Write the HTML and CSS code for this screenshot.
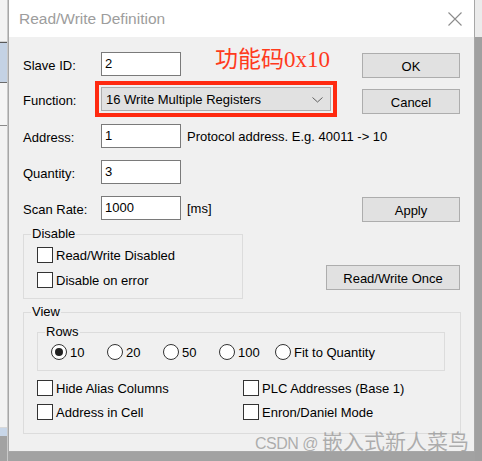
FILE: index.html
```html
<!DOCTYPE html>
<html lang="en">
<head>
    <title>Read/Write Definition</title>
    <meta charset="UTF-8">
    <link rel="stylesheet" href="styles.css">
</head>
<body>
<div class="desk">
    <!-- кусок окна за диалогом -->
    <div class="side side-left">
        <div class="seg s1"></div>
        <div class="seg s2"></div>
        <div class="seg s3"></div>
        <div class="seg s4"></div>
        <div class="seg s5"></div>
        <div class="seg s6"></div>
        <div class="seg s7"></div>
        <div class="seg s8"></div>
    </div>

    <div class="window">
        <div class="titlebar">
            <span class="title">Read/Write Definition</span>
            <svg class="close" width="14" height="14" viewBox="0 0 14 14">
                <path d="M0.5 0.5 L13.5 13.5 M13.5 0.5 L0.5 13.5" stroke="#8c8c8c" stroke-width="1.1" fill="none"/>
            </svg>
        </div>

        <div class="client">
            <div class="row">
                <span class="label">Slave ID:</span>
                <div class="input">2</div>
                <span class="note">功能码0x10</span>
                <button class="btn btn-ok">OK</button>
            </div>
            <div class="row row-func">
                <span class="label">Function:</span>
                <div class="select">
                    <span>16 Write Multiple Registers</span>
                    <svg width="11" height="6" viewBox="0 0 11 6">
                        <path d="M0.5 0.5 L5.5 5 L10.5 0.5" stroke="#606060" stroke-width="1" fill="none"/>
                    </svg>
                </div>
                <button class="btn btn-cancel">Cancel</button>
            </div>
            <div class="row">
                <span class="label">Address:</span>
                <div class="input">1</div>
                <span class="hint">Protocol address. E.g. 40011 -&gt; 10</span>
            </div>
            <div class="row">
                <span class="label">Quantity:</span>
                <div class="input">3</div>
            </div>
            <div class="row">
                <span class="label">Scan Rate:</span>
                <div class="input">1000</div>
                <span class="hint">[ms]</span>
                <button class="btn btn-apply">Apply</button>
            </div>

            <div class="disable-row">
                <fieldset class="group group-disable">
                    <legend>Disable</legend>
                    <div class="check"><span class="box"></span>Read/Write Disabled</div>
                    <div class="check"><span class="box"></span>Disable on error</div>
                </fieldset>
                <button class="btn btn-once">Read/Write Once</button>
            </div>

            <fieldset class="group group-view">
                <legend>View</legend>
                <fieldset class="group group-rows">
                    <legend>Rows</legend>
                    <div class="radios">
                        <div class="radio"><span class="dot on"></span>10</div>
                        <div class="radio"><span class="dot"></span>20</div>
                        <div class="radio"><span class="dot"></span>50</div>
                        <div class="radio"><span class="dot"></span>100</div>
                        <div class="radio radio-last"><span class="dot"></span>Fit to Quantity</div>
                    </div>
                </fieldset>
                <div class="checks">
                    <div class="check"><span class="box"></span>Hide Alias Columns</div>
                    <div class="check"><span class="box"></span>PLC Addresses (Base 1)</div>
                    <div class="check"><span class="box"></span>Address in Cell</div>
                    <div class="check"><span class="box"></span>Enron/Daniel Mode</div>
                </div>
            </fieldset>

            <div class="watermark"><span class="wm-lat">CSDN @</span><span class="wm-cjk">嵌入式新人菜鸟</span></div>
        </div>
    </div>

    <div class="side side-right">
        <div class="seg r1"></div>
        <div class="seg r2"></div>
    </div>
</div>
</body>
</html>
```

FILE: styles.css
```css
* { box-sizing: border-box; }
body { margin: 0; background: #a2a2a2; font-family: "Liberation Sans", Arial, sans-serif; font-size: 13px; color: #000; }
.desk { display: flex; height: 461px; }

.side { display: flex; flex-direction: column; }
.side-left { width: 8px; border-right: 1px solid #c9c9c9; }
.seg { width: 100%; }
.s1 { height: 42px; background: #f3f3f3; border-bottom: 1px solid #d2d2d2; }
.s2 { height: 1px; background: #585858; }
.s3 { height: 40px; background: #c4d2e4; border-bottom: 1px solid #6b6b6b; }
.s4 { height: 43px; background: #f5f5f5; border-bottom: 1px solid #8a8a8a; }
.s5 { height: 301px; background: #f3f3f3; }
.s6 { height: 1px; background: #d8d8d8; }
.s7 { height: 8px; background: #c8d6e8; }
.s8 { flex: 1; background: #a2a2a2; }
.side-right { width: 7px; }
.r1 { height: 37px; background: #ebebeb; }
.r2 { flex: 1; background: #a0a0a0; }

.window { width: 467px; height: 452px; background: #f0f0f0; border: 1px solid #a7a7a7; border-top: 0; display: flex; flex-direction: column; position: relative; }
.titlebar { height: 37px; background: #fff; display: flex; align-items: center; padding: 0 12px 0 10px; }
.title { font-size: 15.5px; color: #9d9d9d; flex: 1; margin-top: 1px; }
.close { margin-top: 1px; }

.client { flex: 1; padding: 15px 14px 0 14px; }

.row { display: flex; align-items: flex-start; height: 24px; margin-bottom: 12px; }
.row-func { margin-top: -1px; margin-bottom: 13px; }
.label { width: 78px; line-height: 24px; padding-top: 2px; }
.input { width: 80px; height: 24px; background: #fff; border: 1px solid #7a7a7a; padding: 3px 0 0 3px; line-height: 16px; }
.hint { margin-left: 6px; line-height: 24px; padding-top: 1px; }

.note { color: #ff3a1c; font-family: "Liberation Serif", "Noto Sans CJK SC", serif; font-size: 23px; line-height: 24px; margin: -4px 0 0 34px; }

.select { width: 230px; height: 24px; background: #e1e1e1; border: 1px solid #adadad; outline: 4px solid #ff2a10; outline-offset: 2px; display: flex; align-items: center; justify-content: space-between; padding: 1px 7px 0 4px; }

.btn { font-family: inherit; font-size: 13px; color: #000; background: #e1e1e1; border: 1px solid #adadad; height: 25px; padding: 1px 0 0; margin-left: auto; }
.btn-ok, .btn-apply { width: 98px; margin-top: 1px; }
.btn-cancel { width: 98px; margin-top: 2px; }
.btn-once { width: 134px; margin-top: 38px; }

.group { border: 1px solid #dcdcdc; margin: 0; min-width: 0; }
.group legend { padding: 0 1px; margin-left: -6px; line-height: 14px; }

.disable-row { display: flex; align-items: flex-start; margin-top: -5px; }
.group-disable { width: 220px; padding: 6px 13px 10px 13px; }

.check { display: flex; align-items: center; height: 16px; white-space: nowrap; }
.check + .check { margin-top: 9px; }
.box { flex: none; width: 16px; height: 16px; border: 1px solid #333; background: #fff; margin-right: 3px; }

.group-view { width: 438px; margin-top: 6px; padding: 6px 15px 13px 13px; }
.group-rows { padding: 5px 13px 10px 13px; }
.radios { display: flex; }
.radio { flex: none; display: flex; align-items: center; width: 56px; height: 16px; white-space: nowrap; }
.radio-last { width: auto; }
.dot { flex: none; width: 16px; height: 16px; border: 1px solid #333; border-radius: 50%; background: #fff; margin-right: 3px; display: flex; align-items: center; justify-content: center; }
.dot.on::after { content: ""; width: 8px; height: 8px; border-radius: 50%; background: #222; }

.checks { display: grid; grid-template-columns: 206px 1fr; row-gap: 8px; margin-top: 9px; }
.checks .check + .check { margin-top: 0; }

.watermark { position: absolute; left: 246px; top: 425px; color: rgba(150, 150, 150, 0.75); white-space: nowrap; display: flex; align-items: baseline; }
.wm-lat { font-size: 16px; letter-spacing: -0.5px; margin-right: 4px; }
.wm-cjk { font-family: "Noto Sans CJK SC", sans-serif; font-size: 21px; }
```
